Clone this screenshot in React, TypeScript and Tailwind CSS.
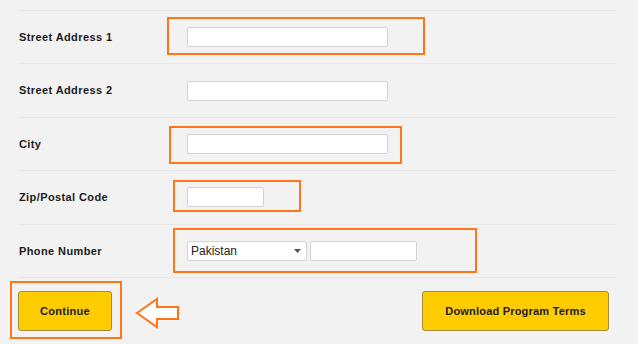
import * as React from "react"

const font = { fontFamily: '"Liberation Sans", Arial, sans-serif' }

function Highlight({ className }: { className: string }) {
  return <div className={`pointer-events-none absolute border-2 border-[#ff7518] ${className}`} />
}

function TextInput({ className }: { className: string }) {
  return (
    <input
      type="text"
      className={`h-[20px] rounded-[2px] border border-[#d2d2d2] bg-white px-1 text-xs outline-none ${className}`}
    />
  )
}

function Row({ label, children }: { label: string; children: React.ReactNode }) {
  return (
    <div className="flex h-[53.4px] items-center border-b border-[#e8e8e8]">
      <div className="w-[169px] pl-px text-[11px] font-bold tracking-[0.4px] text-[#1b1b1b]">{label}</div>
      <div className="relative flex h-full flex-1 items-center">{children}</div>
    </div>
  )
}

function Arrow() {
  return (
    <svg width="46" height="34" viewBox="0 0 46 34" className="ml-[23px] mt-[5px]">
      <path
        d="M2 17 L22 3 L22 11 L43 11 L43 23 L22 23 L22 31 Z"
        fill="#ffffff"
        stroke="#ff7518"
        strokeWidth="2"
        strokeLinejoin="miter"
      />
    </svg>
  )
}

export default function App() {
  return (
    <div className="h-[344px] w-[638px] overflow-hidden bg-[#f2f2f2] pl-[18px] pr-[21px] pt-[10px]" style={font}>
      <div className="border-t border-[#e8e8e8]">
        <Row label="Street Address 1">
          <Highlight className="-left-[20px] top-[6px] h-[38px] w-[258px]" />
          <TextInput className="w-[201px]" />
        </Row>
        <Row label="Street Address 2">
          <TextInput className="w-[201px]" />
        </Row>
        <Row label="City">
          <Highlight className="-left-[18px] top-[8px] h-[38px] w-[233px]" />
          <TextInput className="w-[201px]" />
        </Row>
        <Row label="Zip/Postal Code">
          <Highlight className="-left-[14px] top-[9px] h-[32px] w-[128px]" />
          <TextInput className="w-[77px]" />
        </Row>
        <Row label="Phone Number">
          <Highlight className="-left-[14px] top-[3px] h-[45px] w-[304px]" />
          <div className="flex items-center gap-[3px]">
            <div className="flex h-[20px] w-[120px] items-center justify-between rounded-[2px] border border-[#d2d2d2] bg-white pl-[3px] pr-[5px] text-[12px] text-[#222]">
              <span>Pakistan</span>
              <svg width="7" height="4" viewBox="0 0 7 4">
                <path d="M0 0 L7 0 L3.5 4 Z" fill="#555" />
              </svg>
            </div>
            <TextInput className="w-[107px]" />
          </div>
        </Row>
      </div>
      <div className="flex items-start justify-between pt-[13px]">
        <div className="flex items-start">
          <div className="relative">
            <Highlight className="-left-[8px] -top-[10px] h-[58px] w-[112px]" />
            <button className="h-[40px] w-[94px] rounded-[3px] border border-[#a38c3c] bg-[#ffcc00] text-[11px] font-bold tracking-[0.3px] text-[#1a1a2a]">
              Continue
            </button>
          </div>
          <Arrow />
        </div>
        <button className="mr-[8px] h-[40px] w-[187px] rounded-[3px] border border-[#a38c3c] bg-[#ffcc00] text-[11px] font-bold tracking-[0.2px] text-[#1a1a2a]">
          Download Program Terms
        </button>
      </div>
    </div>
  )
}
